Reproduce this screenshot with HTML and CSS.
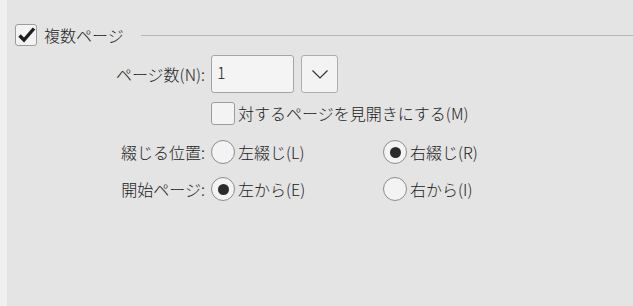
FILE: index.html
```html
<!DOCTYPE html>
<html lang="ja">
<head>
    <meta charset="UTF-8">
    <title>複数ページ</title>
    <link rel="stylesheet" href="styles.css">
</head>
<body>
    <div class="strip"></div>
    <div class="panel">
        <!-- group header -->
        <div class="header">
            <span class="check checked">
                <svg width="22" height="22" viewBox="0 0 22 22"><path d="M4.5 11.5 L9 16 L19 4.5" fill="none" stroke="#1e1e1e" stroke-width="3.4"/></svg>
            </span>
            <span class="header-text">複数ページ</span>
            <span class="rule"></span>
        </div>

        <div class="row row-count">
            <span class="label">ページ数(N):</span>
            <div class="num">1</div>
            <div class="drop">
                <svg width="16" height="9" viewBox="0 0 16 9"><path d="M0.5 0.5 L8 8 L15.5 0.5" fill="none" stroke="#333" stroke-width="1.2"/></svg>
            </div>
        </div>

        <div class="row row-facing">
            <span class="label"></span>
            <span class="check"></span>
            <span class="opt-text">対するページを見開きにする(M)</span>
        </div>

        <div class="row row-binding">
            <span class="label">綴じる位置:</span>
            <div class="opt"><span class="radio"></span><span class="opt-text">左綴じ(L)</span></div>
            <div class="opt"><span class="radio on"></span><span class="opt-text">右綴じ(R)</span></div>
        </div>

        <div class="row row-start">
            <span class="label">開始ページ:</span>
            <div class="opt"><span class="radio on"></span><span class="opt-text">左から(E)</span></div>
            <div class="opt"><span class="radio"></span><span class="opt-text">右から(I)</span></div>
        </div>
    </div>
</body>
</html>
```

FILE: styles.css
```css
body {
    margin: 0;
    display: flex;
    height: 306px;
    overflow: hidden;
    font-family: "Noto Sans CJK JP", "Noto Sans", sans-serif;
    font-size: 16px;
    font-weight: 300;
    color: #222;
}
.strip {
    width: 7px;
    background: #f0f0f0;
}
.panel {
    flex: 1;
    background: #e4e4e4;
    padding: 24px 0 0 8px;
}
.header {
    display: flex;
    align-items: center;
    height: 22px;
}
.header-text {
    margin-left: 7px;
    line-height: 22px;
}
.rule {
    flex: 1;
    height: 1px;
    background: #b5b5b5;
    margin-left: 17px;
}
.check {
    width: 20px;
    height: 20px;
    border: 1px solid #9c9c9c;
    border-radius: 3px;
    background: #f3f3f3;
    display: flex;
    flex-shrink: 0;
}
.check.checked svg {
    margin: -1px;
}
.row {
    display: flex;
    align-items: center;
}
.label {
    width: 190px;
    margin-right: 6px;
    text-align: right;
    white-space: nowrap;
}
.row-count {
    margin-top: 9px;
    height: 38px;
}
.num {
    width: 76px;
    height: 36px;
    border: 1px solid #a5a5a5;
    border-radius: 3px;
    background: #f4f4f4;
    padding: 0 0 0 5px;
    line-height: 33px;
}
.drop {
    width: 35px;
    height: 36px;
    margin-left: 7px;
    border: 1px solid #adadad;
    border-radius: 3px;
    background: #f3f3f3;
    display: flex;
    align-items: center;
    justify-content: center;
}
.row-facing {
    margin-top: 8px;
    height: 24px;
}
.row-facing .check {
    width: 22px;
    height: 21px;
}
.opt-text {
    margin-left: 3px;
    white-space: nowrap;
}
.row-binding {
    margin-top: 15px;
    height: 24px;
}
.row-start {
    margin-top: 13px;
    height: 24px;
}
.opt {
    width: 172px;
    display: flex;
    align-items: center;
}
.radio {
    width: 22px;
    height: 22px;
    border: 1px solid #8c8c8c;
    border-radius: 50%;
    background: #f3f3f3;
    display: flex;
    align-items: center;
    justify-content: center;
    flex-shrink: 0;
}
.radio.on::after {
    content: "";
    width: 11px;
    height: 11px;
    border-radius: 50%;
    background: #2b2b2b;
}
```
